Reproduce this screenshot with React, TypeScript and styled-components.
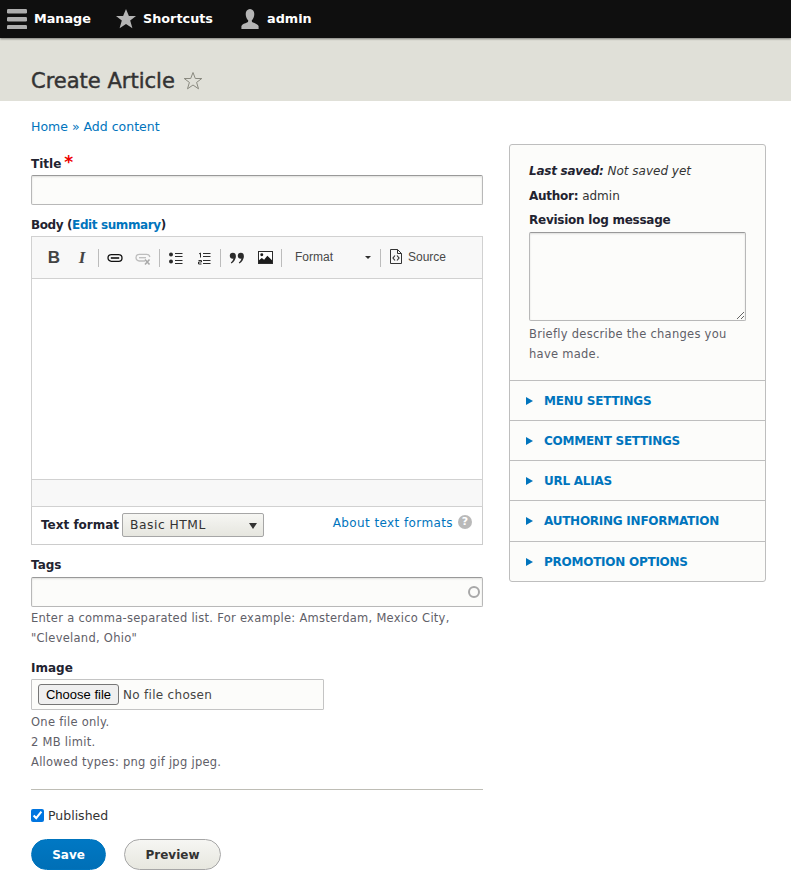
import React from "react";
import styled, { createGlobalStyle } from "styled-components";

const Global = createGlobalStyle`
    html, body {
        margin: 0;
        padding: 0;
        background: #fff;
        color: #222330;
        font-family: "DejaVu Sans", Verdana, sans-serif;
        font-size: 12px;
    }
    * {
        box-sizing: border-box;
    }
`;

const TopBar = styled.div`
    height: 38px;
    background: #0f0f0f;
    box-shadow: 0 1px 2px rgba(0, 0, 0, 0.45);
    display: flex;
    align-items: center;
    padding-left: 7px;
    position: relative;
`;

const TopItem = styled.div<{ $width: number }>`
    width: ${(p) => p.$width}px;
    display: flex;
    align-items: center;
    gap: 7px;
    color: #fff;
    font-size: 12.8px;
    font-weight: 700;
    line-height: 20px;
`;

const TopLabel = styled.span`
    padding-bottom: 1px;
`;

const TitleBand = styled.div`
    height: 63px;
    background: #e0e0d8;
    padding: 30px 0 0 31px;
    display: flex;
    align-items: flex-start;
    gap: 8px;
`;

const PageTitle = styled.h1`
    margin: 0;
    font-size: 21px;
    line-height: 26px;
    font-weight: 400;
    color: #333;
    -webkit-text-stroke: 0.45px #333;
`;

const TitleStar = styled.span`
    display: flex;
    margin-top: 3px;
`;

const Crumbs = styled.div`
    padding: 18px 0 0 31px;
    height: 43px;
    line-height: 16px;
    font-size: 12.5px;
    color: #0074bd;
`;

const Columns = styled.div`
    display: grid;
    grid-template-columns: 452px 257px;
    gap: 26px;
    padding-left: 31px;
`;

const MainCol = styled.div`
    display: flex;
    flex-direction: column;
    padding-top: 11px;
`;

const Label = styled.div<{ $top?: number; $tight?: boolean; $lh?: number }>`
    margin-top: ${(p) => p.$top ?? 0}px;
    font-size: 12px;
    font-weight: 700;
    line-height: ${(p) => p.$lh ?? 18}px;
    height: 20px;
    letter-spacing: ${(p) => (p.$tight ? "-0.4px" : "0")};
    color: #222330;
`;

const Required = styled.span`
    color: #e00;
    font-size: 17px;
    margin-left: 3px;
    line-height: 10px;
`;

const Link = styled.a`
    color: #0074bd;
    text-decoration: none;
`;

const TextInput = styled.input`
    display: block;
    width: 100%;
    height: 30px;
    background: #fcfcfa;
    border: 1px solid #b8b8b8;
    border-top-color: #999;
    border-radius: 2px;
    box-shadow: inset 0 1px 2px rgba(0, 0, 0, 0.12);
    padding: 0 8px;
    outline: none;
`;

const Editor = styled.div`
    border: 1px solid #d1d1d1;
    border-bottom: 0;
    height: 271px;
    display: flex;
    flex-direction: column;
`;

const Toolbar = styled.div`
    height: 42px;
    flex: none;
    background: #f8f8f8;
    border-bottom: 1px solid #d1d1d1;
    display: flex;
    align-items: center;
    padding-left: 8px;
    position: relative;
`;

const ToolBtn = styled.div`
    width: 28px;
    height: 28px;
    display: flex;
    align-items: center;
    justify-content: center;
    flex: none;
`;

const BoldGlyph = styled.b`
    font-family: "Liberation Sans", Arial, sans-serif;
    font-size: 17px;
    color: #444;
`;

const ItalicGlyph = styled.b`
    font-family: "Liberation Serif", serif;
    font-size: 17px;
    font-style: italic;
    color: #444;
`;

const ToolSep = styled.div`
    width: 1px;
    height: 18px;
    background: #bcbcbc;
    flex: none;
    margin: 0 2px;
`;

const Combo = styled.div`
    width: 94px;
    padding: 0 7px 2px 11px;
    display: flex;
    align-items: center;
    justify-content: space-between;
    font-family: "Liberation Sans", Arial, sans-serif;
    font-size: 12px;
    line-height: 14px;
    color: #484848;
`;

const Caret = styled.span`
    width: 0;
    height: 0;
    margin-top: 2px;
    border-left: 3px solid transparent;
    border-right: 3px solid transparent;
    border-top: 3px solid #2f2f2f;
`;

const SourceBtn = styled.div`
    display: flex;
    align-items: center;
    gap: 6px;
    margin-left: 7px;
    font-family: "Liberation Sans", Arial, sans-serif;
    font-size: 12px;
    line-height: 14px;
    padding-bottom: 2px;
    color: #484848;
`;

const EditArea = styled.div`
    flex: 1;
    background: #fff;
`;

const StatusBar = styled.div`
    height: 28px;
    flex: none;
    background: #f8f8f8;
    border-top: 1px solid #d1d1d1;
    border-bottom: 1px solid #d1d1d1;
`;

const FilterRow = styled.div`
    height: 38px;
    border: 1px solid #ccc;
    border-top: 0;
    display: flex;
    align-items: flex-start;
    padding: 6px 10px 0 9px;
`;

const FilterLabel = styled.span`
    font-weight: 700;
    font-size: 12px;
    line-height: 24px;
    margin-right: 3px;
`;

const FormatSelect = styled.div`
    width: 142px;
    height: 24px;
    border: 1px solid #a6a6a6;
    border-radius: 2px;
    background: linear-gradient(#f6f6f3, #e6e6df);
    display: flex;
    align-items: center;
    justify-content: space-between;
    padding: 0 6px 0 7px;
    font-size: 12.3px;
    letter-spacing: 0.5px;
    color: #333;
`;

const SelectArrow = styled.span`
    width: 0;
    height: 0;
    margin-top: 2px;
    border-left: 4.5px solid transparent;
    border-right: 4.5px solid transparent;
    border-top: 6px solid #333;
`;

const FilterHelp = styled.div`
    margin-left: auto;
    display: flex;
    align-items: center;
    gap: 5px;
    line-height: 20px;
    font-size: 12px;
    letter-spacing: 0.4px;
`;

const HelpIcon = styled.span`
    width: 14px;
    height: 14px;
    border-radius: 50%;
    background: #b9b9b9;
    color: #fff;
    font-size: 11px;
    font-weight: 700;
    text-align: center;
    line-height: 14px;
    letter-spacing: 0;
    margin-top: -2px;
`;

const AutoWrap = styled.div`
    position: relative;
`;

const Throbber = styled.span`
    position: absolute;
    right: 3px;
    top: 9px;
    width: 12px;
    height: 12px;
    border: 2px solid #a8a8a8;
    border-radius: 50%;
`;

const Hint = styled.div<{ $top?: number }>`
    margin-top: ${(p) => p.$top ?? 0}px;
    font-size: 11.5px;
    line-height: 20px;
    letter-spacing: 0.27px;
    color: #5f6068;
`;

const FileBox = styled.div`
    width: 293px;
    height: 31px;
    border: 1px solid #c4c4c4;
    background: #fcfcfa;
    padding: 0 6px;
    border-radius: 1px;
    display: flex;
    align-items: center;
    gap: 4px;
`;

const FileButton = styled.button`
    width: 81px;
    height: 21px;
    padding: 0;
    border: 1px solid #767676;
    border-radius: 3px;
    background: #efefef;
    color: #000;
    font-family: "Liberation Sans", Arial, sans-serif;
    font-size: 13px;
`;

const FileName = styled.span`
    font-size: 12px;
    letter-spacing: 0.3px;
    color: #444;
`;

const Rule = styled.hr`
    margin: 17px 0 0;
    border: 0;
    border-top: 1px solid #bebdb5;
`;

const CheckRow = styled.label`
    margin-top: 16px;
    height: 18px;
    display: flex;
    align-items: center;
    gap: 4px;
    font-size: 12.5px;
    color: #333;
`;

const Check = styled.input`
    margin: 0;
    width: 13px;
    height: 13px;
    accent-color: #0075e0;
`;

const Actions = styled.div`
    margin-top: 15px;
    display: flex;
    gap: 18px;
`;

const Button = styled.button<{ $primary?: boolean; $width: number }>`
    width: ${(p) => p.$width}px;
    height: 31px;
    border-radius: 16px;
    border: 1px solid ${(p) => (p.$primary ? "#0074bd" : "#a6a6a6")};
    background: ${(p) => (p.$primary ? "linear-gradient(#0078c4, #006fb6)" : "linear-gradient(#f6f6f3, #e7e7df)")};
    color: ${(p) => (p.$primary ? "#fff" : "#333")};
    font-family: inherit;
    font-size: 12px;
    font-weight: 700;
    padding: 0;
`;

const SideCol = styled.div`
    align-self: start;
    border: 1px solid #bebebe;
    border-radius: 3px;
    background: #fcfcfa;
`;

const Meta = styled.div`
    padding: 16px 19px 0 19px;
    height: 235px;
`;

const MetaLine = styled.div<{ $italic?: boolean; $h: number }>`
    height: ${(p) => p.$h}px;
    line-height: 20px;
    font-size: 12px;
    font-style: ${(p) => (p.$italic ? "italic" : "normal")};
    color: #333;
    b {
        color: #222330;
        letter-spacing: -0.25px;
    }
`;

const LogArea = styled.textarea`
    display: block;
    width: 217px;
    height: 89px;
    margin-top: 2px;
    background: #fcfcfa;
    border: 1px solid #b8b8b8;
    border-top-color: #999;
    border-radius: 2px;
    box-shadow: inset 0 1px 2px rgba(0, 0, 0, 0.12);
    outline: none;
`;

const Accordion = styled.div<{ $h: number }>`
    height: ${(p) => p.$h}px;
    border-top: 1px solid #bebebe;
    display: flex;
    align-items: center;
    padding-left: 16px;
    gap: 11px;
    color: #0074bd;
    font-size: 12px;
    font-weight: 700;
    letter-spacing: -0.25px;
`;

const Arrow = styled.span`
    width: 0;
    height: 0;
    border-top: 4px solid transparent;
    border-bottom: 4px solid transparent;
    border-left: 7px solid #0074bd;
`;

function BurgerIcon() {
    return (
        <svg width="20" height="20" viewBox="0 0 20 20" fill="#aeaeae">
            <rect y="0" width="20" height="4.5" rx="1.2" />
            <rect y="8" width="20" height="4.5" rx="1.2" />
            <rect y="16" width="20" height="4.5" rx="1.2" />
        </svg>
    );
}

function StarIcon() {
    return (
        <svg width="20" height="20" viewBox="0 0 20 20" fill="#b5b5b5">
            <path d="M10 0l2.900 7h7.100l-5.800 4.600 2.200 7.600L10 14.900l-6.400 4.300 2.200-7.600L0 7h7.100z" />
        </svg>
    );
}

function UserIcon() {
    return (
        <svg width="20" height="20" viewBox="0 0 20 20" fill="#b5b5b5">
            <path d="M10 0c2.700 0 4.300 2.200 4.300 5s-1.200 5.200-2.400 6.300c-.4.900.1 1.700 1.100 2.200 2 .9 4.800 1.400 5.600 3.400V20H1.400v-3.100c.8-2 3.600-2.500 5.600-3.400 1-.5 1.500-1.300 1.100-2.200C6.900 10.200 5.700 7.800 5.700 5S7.300 0 10 0z" />
        </svg>
    );
}

function OutlineStar() {
    return (
        <svg width="20" height="20" viewBox="0 0 20 20" fill="none" stroke="#8a8a80" strokeWidth="1">
            <path d="M10 1.500l2.300 6h6.500l-5.200 3.900 1.900 6.400L10 14l-5.500 3.800 1.900-6.400L1.200 7.500h6.500z" />
        </svg>
    );
}

function LinkIcon() {
    return (
        <svg width="16" height="16" viewBox="0 0 16 16" fill="none" stroke="#111" strokeWidth="1.300">
            <rect x="1" y="4.700" width="14" height="6.600" rx="3.300" />
            <path d="M3.800 8h8.400" strokeWidth="1.600" />
        </svg>
    );
}

function UnlinkIcon() {
    return (
        <svg width="16" height="16" viewBox="0 0 16 16" fill="none" stroke="#bdbdbd" strokeWidth="1.300">
            <path d="M10 11H4.300a3.300 3.300 0 0 1 0-6.600h7.400a3.300 3.300 0 0 1 3.200 2.600" />
            <path d="M4 7.700h7" />
            <path d="M10 9.500l4.500 5M14.500 9.500l-4.500 5" stroke="#a9a9a9" strokeWidth="1.600" />
        </svg>
    );
}

function BulletIcon() {
    return (
        <svg width="16" height="16" viewBox="0 0 16 16" fill="#2b2b2b">
            <circle cx="3" cy="4.500" r="2" />
            <circle cx="3" cy="11.500" r="2" />
            <rect x="7" y="3" width="7.500" height="1" />
            <rect x="7" y="6" width="7.500" height="1" />
            <rect x="7" y="10" width="7.500" height="1" />
            <rect x="7" y="13" width="7.500" height="1" />
        </svg>
    );
}

function NumberIcon() {
    return (
        <svg width="16" height="16" viewBox="0 0 16 16" fill="none" stroke="#2b2b2b" strokeWidth="1">
            <path d="M3 4l1.500-1v4.500" />
            <path d="M2.500 10.500h3v1.500h-3v2h3" />
            <path d="M7 3.500h7.500M7 6.500h7.500M7 10.500h7.500M7 13.500h7.500" />
        </svg>
    );
}

function QuoteIcon() {
    return (
        <svg width="16" height="16" viewBox="0 0 16 16" fill="#2b2b2b">
            <circle cx="3.800" cy="5.800" r="3" />
            <circle cx="11.800" cy="5.800" r="3" />
            <path d="M6.800 6c0 3.500-1.800 6.300-4.500 7.500l-.5-1C3.500 11.300 4.500 9.500 4.500 7.500zM14.800 6c0 3.500-1.800 6.300-4.500 7.500l-.5-1c1.700-1.200 2.700-3 2.700-5z" />
        </svg>
    );
}

function ImageIcon() {
    return (
        <svg width="15" height="13" viewBox="0 0 16 14">
            <rect x="0.500" y="0.500" width="15" height="13" fill="#fff" stroke="#1c1c1c" />
            <circle cx="4" cy="4" r="1.600" fill="#1c1c1c" />
            <path d="M1 13V10l3-2.500 2.500 2 3.500-4.500 5 5V13z" fill="#1c1c1c" />
        </svg>
    );
}

function SourceIcon() {
    return (
        <svg width="12" height="15" viewBox="0 0 12 15" fill="none" stroke="#333" strokeWidth="1">
            <path d="M.500.500h7l4 4v10h-11z" />
            <path d="M7.500.500v4h4" />
            <path d="M5 6.500L3 9l2 2.500M7 6.500L9 9l-2 2.500" strokeWidth="1.200" />
        </svg>
    );
}

const accordions = [
    { label: "MENU SETTINGS", h: 40 },
    { label: "COMMENT SETTINGS", h: 40 },
    { label: "URL ALIAS", h: 40 },
    { label: "AUTHORING INFORMATION", h: 41 },
    { label: "PROMOTION OPTIONS", h: 40 },
];

export default function App(): JSX.Element {
    return (
        <>
            <Global />
            <TopBar>
                <TopItem $width={109}>
                    <BurgerIcon />
                    <TopLabel>Manage</TopLabel>
                </TopItem>
                <TopItem $width={124}>
                    <StarIcon />
                    <TopLabel>Shortcuts</TopLabel>
                </TopItem>
                <TopItem $width={90}>
                    <UserIcon />
                    <TopLabel>admin</TopLabel>
                </TopItem>
            </TopBar>
            <TitleBand>
                <PageTitle>Create Article</PageTitle>
                <TitleStar>
                    <OutlineStar />
                </TitleStar>
            </TitleBand>
            <Crumbs>Home » Add content</Crumbs>
            <Columns>
                <MainCol>
                    <Label>
                        Title
                        <Required>*</Required>
                    </Label>
                    <TextInput />
                    <Label $top={11} $tight>
                        Body (<Link>Edit summary</Link>)
                    </Label>
                    <Editor>
                        <Toolbar>
                            <ToolBtn>
                                <BoldGlyph>B</BoldGlyph>
                            </ToolBtn>
                            <ToolBtn>
                                <ItalicGlyph>I</ItalicGlyph>
                            </ToolBtn>
                            <ToolSep />
                            <ToolBtn>
                                <LinkIcon />
                            </ToolBtn>
                            <ToolBtn>
                                <UnlinkIcon />
                            </ToolBtn>
                            <ToolSep />
                            <ToolBtn>
                                <BulletIcon />
                            </ToolBtn>
                            <ToolBtn>
                                <NumberIcon />
                            </ToolBtn>
                            <ToolSep />
                            <ToolBtn>
                                <QuoteIcon />
                            </ToolBtn>
                            <ToolBtn>
                                <ImageIcon />
                            </ToolBtn>
                            <ToolSep />
                            <Combo>
                                Format
                                <Caret />
                            </Combo>
                            <ToolSep />
                            <SourceBtn>
                                <SourceIcon />
                                Source
                            </SourceBtn>
                        </Toolbar>
                        <EditArea />
                        <StatusBar />
                    </Editor>
                    <FilterRow>
                        <FilterLabel>Text format</FilterLabel>
                        <FormatSelect>
                            Basic HTML
                            <SelectArrow />
                        </FormatSelect>
                        <FilterHelp>
                            <Link>About text formats</Link>
                            <HelpIcon>?</HelpIcon>
                        </FilterHelp>
                    </FilterRow>
                    <Label $top={12} $lh={16}>
                        Tags
                    </Label>
                    <AutoWrap>
                        <TextInput />
                        <Throbber />
                    </AutoWrap>
                    <Hint $top={1}>
                        Enter a comma-separated list. For example: Amsterdam, Mexico City, "Cleveland, Ohio"
                    </Hint>
                    <Label $top={11}>Image</Label>
                    <FileBox>
                        <FileButton type="button">Choose file</FileButton>
                        <FileName>No file chosen</FileName>
                    </FileBox>
                    <Hint $top={2}>One file only.</Hint>
                    <Hint>2 MB limit.</Hint>
                    <Hint>Allowed types: png gif jpg jpeg.</Hint>
                    <Rule />
                    <CheckRow>
                        <Check type="checkbox" defaultChecked />
                        Published
                    </CheckRow>
                    <Actions>
                        <Button $primary $width={75}>
                            Save
                        </Button>
                        <Button $width={97}>Preview</Button>
                    </Actions>
                </MainCol>
                <SideCol>
                    <Meta>
                        <MetaLine $italic $h={25}>
                            <b>Last saved:</b> Not saved yet
                        </MetaLine>
                        <MetaLine $h={24}>
                            <b>Author:</b> admin
                        </MetaLine>
                        <MetaLine $h={20}>
                            <b>Revision log message</b>
                        </MetaLine>
                        <LogArea />
                        <Hint $top={3}>Briefly describe the changes you have made.</Hint>
                    </Meta>
                    {accordions.map((a) => (
                        <Accordion key={a.label} $h={a.h}>
                            <Arrow />
                            {a.label}
                        </Accordion>
                    ))}
                </SideCol>
            </Columns>
        </>
    );
}
